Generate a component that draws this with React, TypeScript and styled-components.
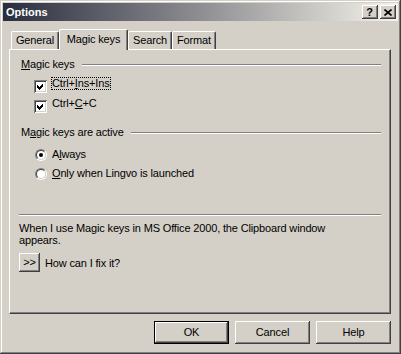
import React from 'react';
import styled, { createGlobalStyle } from 'styled-components';

const Global = createGlobalStyle`
  html, body { margin: 0; padding: 0; background: #d4d0c8; }
  body {
    font-family: "Liberation Sans", Arial, sans-serif;
    font-size: 11px;
    letter-spacing: -0.15px;
    color: #000;
  }
  * { box-sizing: border-box; }
`;

const Window = styled.div`
  width: 401px;
  height: 354px;
  background: #d4d0c8;
  padding: 3px;
  box-shadow: inset -1px -1px #404040, inset 1px 1px #d4d0c8,
    inset -2px -2px #808080, inset 2px 2px #ffffff;
  display: flex;
  flex-direction: column;
`;

const TitleBar = styled.div`
  height: 18px;
  display: flex;
  align-items: center;
  padding: 0 2px 0 3px;
  background: linear-gradient(to right, #2a2d3e 0%, #8e8e92 50%, #f6f3ea 100%);
`;

const Title = styled.div`
  flex: 1;
  color: #fff;
  font-weight: bold;
  font-size: 11px;
  line-height: 13px;
  letter-spacing: 0;
`;

const TitleButtons = styled.div`
  display: flex;
  gap: 2px;
`;

const CaptionButton = styled.div`
  width: 16px;
  height: 14px;
  background: #d4d0c8;
  box-shadow: inset -1px -1px #404040, inset 1px 1px #ffffff,
    inset -2px -2px #808080;
  display: flex;
  align-items: center;
  justify-content: center;
  font-weight: bold;
  font-size: 11px;
  line-height: 11px;
  padding-right: 1px;
`;

const Body = styled.div`
  padding: 8px 7px 0 6px;
  display: flex;
  flex-direction: column;
`;

const TabStrip = styled.div`
  display: flex;
  align-items: flex-end;
  height: 20px;
  padding-left: 2px;
`;

const Tab = styled.div<{ $w: number; $active?: boolean }>`
  width: ${(p) => p.$w}px;
  height: ${(p) => (p.$active ? 21 : 18)}px;
  margin-bottom: ${(p) => (p.$active ? -1 : 0)}px;
  position: relative;
  z-index: ${(p) => (p.$active ? 1 : 0)};
  background: #d4d0c8;
  border-left: 1px solid #fff;
  border-top: 1px solid #fff;
  border-right: 1px solid #404040;
  border-radius: 2px 2px 0 0;
  box-shadow: inset -1px 0 #808080;
  display: flex;
  justify-content: center;
  padding-top: ${(p) => (p.$active ? 3 : 2)}px;
  line-height: 13px;
  white-space: nowrap;
`;

const Panel = styled.div`
  height: 265px;
  border-left: 1px solid #fff;
  border-top: 1px solid #fff;
  border-right: 1px solid #404040;
  border-bottom: 1px solid #404040;
  box-shadow: inset -1px -1px #808080;
  padding: 8px 9px 0 9px;
  display: flex;
  flex-direction: column;
`;

const GroupHeader = styled.div<{ $mt: number }>`
  margin-top: ${(p) => p.$mt}px;
  display: flex;
  align-items: center;
  gap: 7px;
  height: 13px;
  padding-left: 2px;
  line-height: 13px;
`;

const Etched = styled.div`
  flex: 1;
  height: 2px;
  border-top: 1px solid #808080;
  border-bottom: 1px solid #fff;
`;

const Separator = styled.div<{ $mt: number }>`
  margin-top: ${(p) => p.$mt}px;
  height: 2px;
  border-top: 1px solid #808080;
  border-bottom: 1px solid #fff;
`;

const Acc = styled.span`
  text-decoration: underline;
`;

const OptionRow = styled.div<{ $mt: number; $indent: number }>`
  margin-top: ${(p) => p.$mt}px;
  padding-left: ${(p) => p.$indent}px;
  display: flex;
  align-items: flex-start;
  gap: 5px;
  line-height: 13px;
`;

const CheckBox = styled.div`
  width: 13px;
  height: 13px;
  margin-top: 3px;
  background: #fff;
  box-shadow: inset 1px 1px #808080, inset -1px -1px #fff,
    inset 2px 2px #404040, inset -2px -2px #d4d0c8;
  flex-shrink: 0;
`;

const RadioOuter = styled.div`
  width: 12px;
  height: 12px;
  margin-top: 1px;
  border-radius: 50%;
  border: 1px solid;
  border-color: #808080 #fff #fff #808080;
  flex-shrink: 0;
`;

const RadioInner = styled.div`
  width: 10px;
  height: 10px;
  border-radius: 50%;
  border: 1px solid;
  border-color: #404040 #d4d0c8 #d4d0c8 #404040;
  background: #fff;
  display: flex;
  align-items: center;
  justify-content: center;
`;

const Dot = styled.div`
  width: 4px;
  height: 4px;
  border-radius: 50%;
  background: #000;
`;

const Label = styled.span<{ $focus?: boolean }>`
  padding: 0 1px;
  margin-left: -1px;
  outline: ${(p) => (p.$focus ? '1px dotted #000' : 'none')};
  outline-offset: -1px;
  white-space: nowrap;
`;

const Note = styled.div`
  margin-top: 6px;
  max-width: 340px;
  line-height: 12px;
`;

const HelpRow = styled.div`
  margin-top: 7px;
  display: flex;
  align-items: center;
  gap: 5px;
`;

const Button = styled.div<{ $w: number; $h: number; $default?: boolean }>`
  width: ${(p) => p.$w}px;
  height: ${(p) => p.$h}px;
  background: #d4d0c8;
  display: flex;
  align-items: center;
  justify-content: center;
  line-height: 13px;
  box-shadow: ${(p) =>
    p.$default
      ? 'inset 0 0 0 1px #000, inset -2px -2px #404040, inset 2px 2px #fff, inset -3px -3px #808080'
      : 'inset -1px -1px #404040, inset 1px 1px #fff, inset -2px -2px #808080'};
`;

const Footer = styled.div`
  margin-top: 7px;
  display: flex;
  justify-content: flex-end;
  gap: 6px;
`;

const Check = () => (
  <svg width="13" height="13" viewBox="0 0 13 13" shapeRendering="crispEdges">
    <polygon points="3,5 5,7 9,3 9,6 5,10 3,8" fill="#000" />
  </svg>
);

const CloseGlyph = () => (
  <svg width="8" height="7" viewBox="0 0 8 7">
    <path d="M0.5 0.5 L7.5 6.5 M7.5 0.5 L0.5 6.5" stroke="#000" strokeWidth="1.6" />
  </svg>
);

export default function App() {
  return (
    <>
      <Global />
      <Window>
        <TitleBar>
          <Title>Options</Title>
          <TitleButtons>
            <CaptionButton>?</CaptionButton>
            <CaptionButton>
              <CloseGlyph />
            </CaptionButton>
          </TitleButtons>
        </TitleBar>
        <Body>
          <TabStrip>
            <Tab $w={48}>General</Tab>
            <Tab $w={69} $active>
              Magic keys
            </Tab>
            <Tab $w={44}>Search</Tab>
            <Tab $w={44}>Format</Tab>
          </TabStrip>
          <Panel>
            <GroupHeader $mt={0}>
              <span>
                <Acc>M</Acc>agic keys
              </span>
              <Etched />
            </GroupHeader>
            <OptionRow $mt={6} $indent={15}>
              <CheckBox>
                <Check />
              </CheckBox>
              <Label $focus>
                Ctrl+<Acc>I</Acc>ns+Ins
              </Label>
            </OptionRow>
            <OptionRow $mt={4} $indent={15}>
              <CheckBox>
                <Check />
              </CheckBox>
              <Label>
                Ctrl+<Acc>C</Acc>+C
              </Label>
            </OptionRow>
            <GroupHeader $mt={13}>
              <span>
                M<Acc>a</Acc>gic keys are active
              </span>
              <Etched />
            </GroupHeader>
            <OptionRow $mt={9} $indent={16}>
              <RadioOuter>
                <RadioInner>
                  <Dot />
                </RadioInner>
              </RadioOuter>
              <Label>
                A<Acc>l</Acc>ways
              </Label>
            </OptionRow>
            <OptionRow $mt={6} $indent={16}>
              <RadioOuter>
                <RadioInner />
              </RadioOuter>
              <Label>
                <Acc>O</Acc>nly when Lingvo is launched
              </Label>
            </OptionRow>
            <Separator $mt={34} />
            <Note>
              When I use Magic keys in MS Office 2000, the Clipboard window appears.
            </Note>
            <HelpRow>
              <Button $w={21} $h={19}>&gt;&gt;</Button>
              <span>How can I fix it?</span>
            </HelpRow>
          </Panel>
          <Footer>
            <Button $w={75} $h={23} $default>
              OK
            </Button>
            <Button $w={75} $h={23}>
              Cancel
            </Button>
            <Button $w={75} $h={23}>
              Help
            </Button>
          </Footer>
        </Body>
      </Window>
    </>
  );
}
